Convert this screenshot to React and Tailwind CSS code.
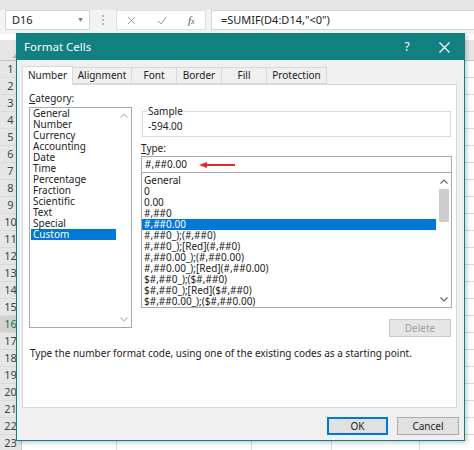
import React from "react";

const categories = [
  "General",
  "Number",
  "Currency",
  "Accounting",
  "Date",
  "Time",
  "Percentage",
  "Fraction",
  "Scientific",
  "Text",
  "Special",
  "Custom",
];

const formats = [
  "General",
  "0",
  "0.00",
  "#,##0",
  "#,##0.00",
  "#,##0_);(#,##0)",
  "#,##0_);[Red](#,##0)",
  "#,##0.00_);(#,##0.00)",
  "#,##0.00_);[Red](#,##0.00)",
  "$#,##0_);($#,##0)",
  "$#,##0_);[Red]($#,##0)",
  "$#,##0.00_);($#,##0.00)",
];

const tabs = [
  ["Number", "w-[51px]"],
  ["Alignment", "w-[59px]"],
  ["Font", "w-[45px]"],
  ["Border", "w-[45px]"],
  ["Fill", "w-[45px]"],
  ["Protection", "w-[60px]"],
];

const colWidths = ["w-[95px]", "w-[135px]", "w-[80px]", "w-[88px]", "w-[60px]"];

function Chevron({ up, className }) {
  return (
    <svg width="8" height="5" viewBox="0 0 8 5" className={className}>
      <path
        d={up ? "M0.5 4.5 L4 1 L7.5 4.5" : "M0.5 0.5 L4 4 L7.5 0.5"}
        fill="none"
        stroke="currentColor"
        strokeWidth="1.1"
      />
    </svg>
  );
}

export default function App() {
  const rows = Array.from({ length: 23 }, (_, i) => i + 1);

  return (
    <div className="relative w-[474px] h-[450px] overflow-hidden bg-white font-['Noto_Sans',sans-serif] text-[#222]">
      {/* ribbon edge */}
      <div className="h-[10px] bg-[#e6e6e6]" />

      {/* formula bar */}
      <div className="h-[24px] bg-[#f3f3f3] flex items-start">
        <div className="ml-[5px] w-[85px] h-[20px] bg-white border border-[#d4d4d4] flex items-center pl-[6px] pr-[5px] text-[11px]">
          <span className="flex-1">D16</span>
          <span className="text-[7px] text-[#777]">▼</span>
        </div>
        <div className="ml-[12px] h-[20px] flex flex-col justify-center gap-[2px]">
          <span className="w-[2px] h-[2px] bg-[#bbb]" />
          <span className="w-[2px] h-[2px] bg-[#bbb]" />
          <span className="w-[2px] h-[2px] bg-[#bbb]" />
        </div>
        <div className="ml-[12px] w-[90px] h-[20px] bg-white border border-[#e0e0e0] flex items-center justify-around text-[#9a9a9a]">
          <svg width="9" height="9" viewBox="0 0 9 9">
            <path d="M1 1 L8 8 M8 1 L1 8" stroke="currentColor" strokeWidth="1" />
          </svg>
          <svg width="10" height="9" viewBox="0 0 10 9">
            <path d="M1 5 L4 8 L9 1" fill="none" stroke="currentColor" strokeWidth="1" />
          </svg>
          <span className="font-['Liberation_Serif',serif] italic text-[11px] text-[#555]">
            f<span className="text-[8px]">x</span>
          </span>
        </div>
        <div className="ml-[5px] flex-1 h-[20px] bg-white border border-[#d4d4d4] border-r-0 flex items-center pl-[9px] text-[11px] text-[#222]">
          =SUMIF(D4:D14,"&lt;0")
        </div>
      </div>

      {/* column header */}
      <div className="h-[6px] bg-white" />
      <div className="h-[21px] bg-[#e6e6e6] border-b border-[#c8c8c8] flex">
        <div className="w-[22px] border-r border-[#c8c8c8] flex items-end justify-end p-[2px]">
          <div className="w-0 h-0 border-l-[7px] border-l-transparent border-b-[7px] border-b-[#b4b4b4]" />
        </div>
      </div>

      {/* grid rows */}
      {rows.map((r) => (
        <div key={r} className="h-[17px] flex border-b border-[#dadada]">
          <div
            className={`w-[22px] shrink-0 border-r border-[#c8c8c8] flex items-center justify-center text-[11px] ${
              r === 16 ? "bg-[#d2d2d2] text-[#217346]" : "bg-[#e6e6e6] text-[#444]"
            }`}
          >
            {r}
          </div>
          {colWidths.map((w, i) => (
            <div key={i} className={`${w} shrink-0 border-r border-[#dadada]`} />
          ))}
        </div>
      ))}

      {/* Format Cells dialog */}
      <div className="absolute left-[16px] top-[33px] w-[449px] h-[408px] border border-[#128080] bg-[#f0f0f0] flex flex-col shadow-[2px_2px_4px_rgba(0,0,0,0.2)]">
        <div className="h-[26px] bg-[#128080] flex items-center text-white">
          <span className="ml-[7px] flex-1 text-[11.5px]">Format Cells</span>
          <span className="w-[14px] text-[12px] text-center mr-[25px]">?</span>
          <svg width="11" height="11" viewBox="0 0 11 11" className="mr-[14px]">
            <path d="M0.5 0.5 L10.5 10.5 M10.5 0.5 L0.5 10.5" stroke="white" strokeWidth="1.2" />
          </svg>
        </div>

        {/* tabs */}
        <div className="mt-[7px] ml-[5px] flex h-[17px] items-end">
          {tabs.map(([t, w], i) => (
            <div
              key={t}
              className={`${w} flex items-center justify-center text-[10px] border border-[#d9d9d9] ${
                i === 0
                  ? "h-[19px] bg-white border-b-white relative z-10 -mb-px"
                  : "h-[17px] bg-[#f0f0f0] border-l-0 -ml-0"
              }`}
            >
              {t}
            </div>
          ))}
        </div>

        {/* tab panel */}
        <div className="ml-[5px] w-[435px] h-[324px] bg-white border border-[#d9d9d9] text-[10px] leading-[11px]">
          <div className="flex pl-[6px]">
            {/* category */}
            <div className="w-[103px] pt-[8px]">
              <div className="h-[11px]">
                <span className="underline">C</span>ategory:
              </div>
              <div className="mt-[3px] h-[221px] border border-[#a8a8a8] flex">
                <div className="flex-1">
                  {categories.map((c) => (
                    <div
                      key={c}
                      className={`h-[11px] pl-[2px] ml-[1px] ${
                        c === "Custom" ? "bg-[#0078d7] text-white" : ""
                      }`}
                    >
                      {c}
                    </div>
                  ))}
                </div>
                <div className="w-[15px] flex flex-col items-center justify-between py-[5px] text-[#bdbdbd]">
                  <Chevron up />
                  <Chevron />
                </div>
              </div>
            </div>

            {/* type side */}
            <div className="ml-[9px] w-[311px] pt-[21px]">
              <fieldset className="ml-[1px] w-[309px] h-[31px] border border-[#dcdcdc] px-[5px]">
                <legend className="px-[1px] ml-[-1px] h-[11px]">Sample</legend>
                <div className="mt-[4px]">-594.00</div>
              </fieldset>
              <div className="mt-[6px] h-[11px]">
                <span className="underline">T</span>ype:
              </div>
              <div className="mt-[2px] h-[17px] border border-[#a8a8a8] flex items-center pl-[3px]">
                <span>#,##0.00</span>
                <svg width="36" height="6" viewBox="0 0 36 6" className="ml-[12px]">
                  <path d="M0 3 L8 0 L8 6 Z" fill="#e8262a" />
                  <rect x="7" y="2" width="29" height="2" fill="#e8262a" />
                </svg>
              </div>
              <div className="h-[135px] border border-[#a8a8a8] border-t-0 flex overflow-hidden">
                <div className="flex-1 pt-[2px]">
                  {formats.map((f) => (
                    <div
                      key={f}
                      className={`h-[11px] pl-[2px] whitespace-nowrap ${
                        f === "#,##0.00" ? "bg-[#0078d7] text-white" : ""
                      }`}
                    >
                      {f}
                    </div>
                  ))}
                </div>
                <div className="w-[15px] flex flex-col items-center pt-[6px] pb-[5px] text-[#606060]">
                  <Chevron up />
                  <div className="mt-[5px] w-[10px] h-[33px] bg-[#cdcdcd]" />
                  <div className="flex-1" />
                  <Chevron />
                </div>
              </div>
              <div className="mt-[11px] flex justify-end pr-[1px]">
                <div className="w-[62px] h-[18px] bg-[#e6e6e6] border border-[#cccccc] text-[#a0a0a0] flex items-center justify-center">
                  Delete
                </div>
              </div>
            </div>
          </div>
          <div className="mt-[11px] pl-[7px] h-[11px]">
            Type the number format code, using one of the existing codes as a starting point.
          </div>
        </div>

        {/* footer */}
        <div className="mt-[9px] flex justify-end gap-[9px] pr-[5px] text-[10px]">
          <div className="w-[61px] h-[18px] bg-[#e1e1e1] border-2 border-[#0078d7] flex items-center justify-center">
            OK
          </div>
          <div className="w-[62px] h-[18px] bg-[#e1e1e1] border border-[#adadad] flex items-center justify-center">
            Cancel
          </div>
        </div>
      </div>
    </div>
  );
}
